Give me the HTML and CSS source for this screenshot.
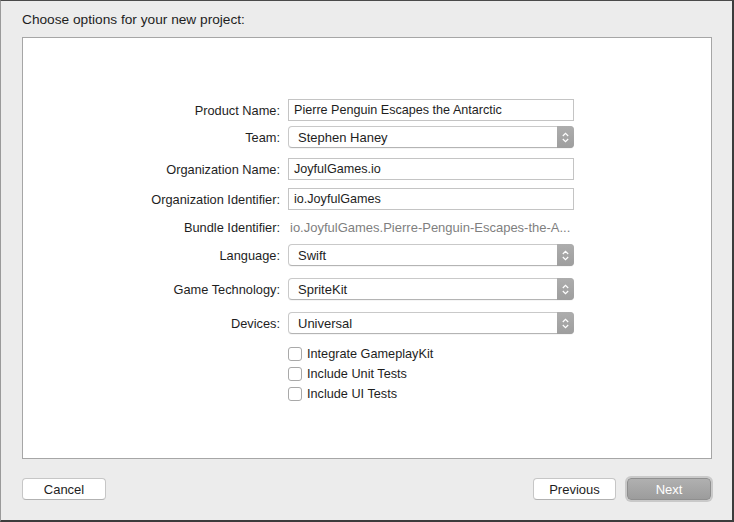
FILE: index.html
```html
<!DOCTYPE html>
<html lang="en">

<head>
    <meta charset="UTF-8">
    <title>Choose options for your new project</title>
    <link rel="stylesheet" href="styles.css">
</head>

<body>
    <div class="window">
        <div class="title">Choose options for your new project:</div>

        <div class="panel">
            <div class="row first">
                <div class="label">Product Name:</div>
                <div class="field">Pierre Penguin Escapes the Antarctic</div>
            </div>
            <div class="row g5">
                <div class="label">Team:</div>
                <div class="popup">
                    <span>Stephen Haney</span>
                    <span class="stepper"><svg width="7" height="11" viewBox="0 0 7 11"><path d="M0.8 4 L3.5 1.3 L6.2 4 M0.8 7 L3.5 9.7 L6.2 7" fill="none" stroke="#fff" stroke-width="1.2"/></svg></span>
                </div>
            </div>
            <div class="row g10">
                <div class="label">Organization Name:</div>
                <div class="field">JoyfulGames.io</div>
            </div>
            <div class="row g8">
                <div class="label">Organization Identifier:</div>
                <div class="field">io.JoyfulGames</div>
            </div>
            <div class="row g8 short">
                <div class="label">Bundle Identifier:</div>
                <div class="value">io.JoyfulGames.Pierre-Penguin-Escapes-the-A...</div>
            </div>
            <div class="row g8">
                <div class="label">Language:</div>
                <div class="popup">
                    <span>Swift</span>
                    <span class="stepper"><svg width="7" height="11" viewBox="0 0 7 11"><path d="M0.8 4 L3.5 1.3 L6.2 4 M0.8 7 L3.5 9.7 L6.2 7" fill="none" stroke="#fff" stroke-width="1.2"/></svg></span>
                </div>
            </div>
            <div class="row g12">
                <div class="label">Game Technology:</div>
                <div class="popup">
                    <span>SpriteKit</span>
                    <span class="stepper"><svg width="7" height="11" viewBox="0 0 7 11"><path d="M0.8 4 L3.5 1.3 L6.2 4 M0.8 7 L3.5 9.7 L6.2 7" fill="none" stroke="#fff" stroke-width="1.2"/></svg></span>
                </div>
            </div>
            <div class="row g12">
                <div class="label">Devices:</div>
                <div class="popup">
                    <span>Universal</span>
                    <span class="stepper"><svg width="7" height="11" viewBox="0 0 7 11"><path d="M0.8 4 L3.5 1.3 L6.2 4 M0.8 7 L3.5 9.7 L6.2 7" fill="none" stroke="#fff" stroke-width="1.2"/></svg></span>
                </div>
            </div>
            <div class="row check g10">
                <div class="label"></div>
                <label class="option"><span class="box"></span>Integrate GameplayKit</label>
            </div>
            <div class="row check">
                <div class="label"></div>
                <label class="option"><span class="box"></span>Include Unit Tests</label>
            </div>
            <div class="row check">
                <div class="label"></div>
                <label class="option"><span class="box"></span>Include UI Tests</label>
            </div>
        </div>

        <div class="footer">
            <button class="btn cancel">Cancel</button>
            <div class="right">
                <button class="btn">Previous</button>
                <button class="btn next">Next</button>
            </div>
        </div>
    </div>
</body>

</html>
```

FILE: styles.css
```css
body {
    margin: 0;
    font-family: "Liberation Sans", Arial, sans-serif;
    font-size: 13px;
    color: #1e1e1e;
}

.window {
    width: 734px;
    height: 522px;
    box-sizing: border-box;
    background-color: #ececec;
    border-top: 1px solid #4a4a4a;
    border-left: 1px solid #9a9a9a;
    border-right: 2px solid #3c3c3c;
    border-bottom: 2px solid #3c3c3c;
    padding: 0 20px 0 21px;
}

.title {
    height: 36px;
    line-height: 38px;
    font-size: 13.7px;
}

.panel {
    height: 422px;
    box-sizing: border-box;
    background-color: white;
    border: 1px solid #a6a6a6;
    padding-top: 61px;
}

.row {
    display: flex;
    align-items: center;
    height: 22px;
}

.row.short {
    height: 18px;
}

.row.check {
    height: 20px;
}

.g5 { margin-top: 5px; }
.g8 { margin-top: 8px; }
.g10 { margin-top: 10px; }
.g12 { margin-top: 12px; }

.label {
    width: 257px;
    margin-right: 8px;
    text-align: right;
    flex-shrink: 0;
    font-size: 12.8px;
}

.field {
    width: 286px;
    height: 22px;
    box-sizing: border-box;
    border: 1px solid #c4c4c4;
    padding-left: 5px;
    line-height: 20px;
    font-size: 12.6px;
    white-space: nowrap;
    overflow: hidden;
}

.value {
    padding-left: 2px;
    color: #7f7f7f;
    white-space: nowrap;
}

.popup {
    width: 286px;
    height: 22px;
    box-sizing: border-box;
    border: 1px solid #c9c9c9;
    border-bottom-color: #b4b4b4;
    border-radius: 4px;
    display: flex;
    align-items: center;
    justify-content: space-between;
    padding-left: 9px;
    box-shadow: 0 1px 0 rgba(0, 0, 0, 0.04);
}

.stepper {
    width: 17px;
    height: 22px;
    margin: -1px -1px -1px 0;
    background: linear-gradient(#adadad, #9e9e9e);
    border-radius: 0 4px 4px 0;
    display: flex;
    align-items: center;
    justify-content: center;
}

.option {
    display: flex;
    align-items: center;
    font-size: 12.7px;
}

.box {
    width: 14px;
    height: 14px;
    box-sizing: border-box;
    border: 1px solid #a9a9a9;
    border-radius: 3px;
    background-color: white;
    margin-right: 5px;
}

.footer {
    display: flex;
    justify-content: space-between;
    margin-top: 19px;
}

.right {
    display: flex;
    gap: 11px;
}

.btn {
    height: 22px;
    box-sizing: border-box;
    border: 1px solid #c6c6c6;
    border-bottom-color: #b2b2b2;
    border-radius: 4px;
    background-color: white;
    font-family: inherit;
    font-size: 13px;
    color: #1e1e1e;
    padding: 0;
}

.cancel {
    width: 84px;
}

.right .btn {
    width: 83px;
}

.right .btn.next {
    width: 84px;
    margin-right: 1px;
    border-color: #8f8f8f;
    background: linear-gradient(#b0b0b0, #9c9c9c);
    color: white;
    box-shadow: 0 0 0 2px #c9c9c9;
}
```
